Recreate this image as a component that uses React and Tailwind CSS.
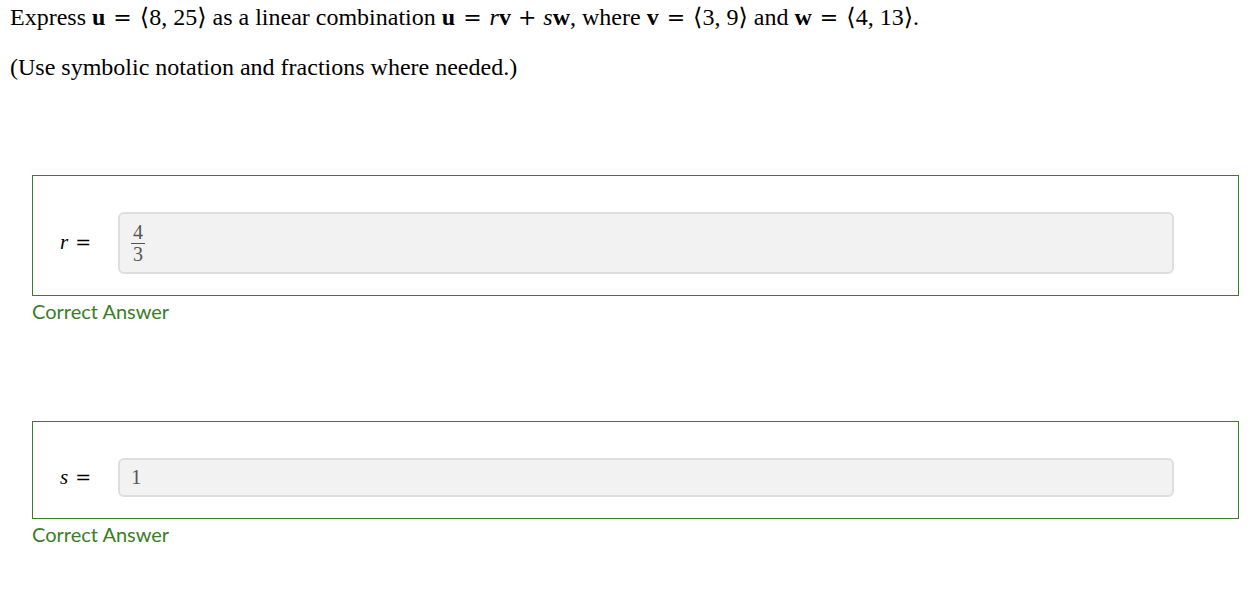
import React from 'react';

const serif = { fontFamily: '"Liberation Serif", "DejaVu Serif", serif' };
const sym = { fontFamily: '"DejaVu Serif", "Liberation Serif", serif' };

// relation sign in math style, a little wider than the text font's
const Op = ({ children, gap = 'mx-[2px]' }) => (
  <span className={`${gap} text-[22px] leading-none`} style={sym}>
    {children}
  </span>
);

const Answer = ({ label, children, tall }) => (
  <div className="ml-[32px] mr-[12px]">
    <div className="border border-[#3b7d26] pt-[36px] pb-[21px] pl-[85px] pr-[64px] relative flex items-center">
      <div className="absolute left-[27px] text-[21px] text-black" style={serif}>
        <i>{label}</i>
        <span className="ml-[7px] text-[19px]" style={sym}>=</span>
      </div>
      <div
        className={`flex-1 rounded-[6px] border-2 border-[#dedede] bg-[#f2f2f2] px-[11px] text-[#555] flex items-center ${
          tall ? 'h-[62px]' : 'h-[39px]'
        }`}
        style={serif}
      >
        {children}
      </div>
    </div>
    <div
      className="mt-[2px] text-[20px] leading-[26px] text-[#3b7d26]"
      style={{ fontFamily: '"Segoe UI", Lato, "Open Sans", sans-serif' }}
    >
      Correct Answer
    </div>
  </div>
);

export default function App() {
  return (
    <div className="min-h-[591px] bg-white text-black">
      <div className="pl-[10px]" style={serif}>
        <p className="pt-[3px] h-[31px] text-[24px] leading-[28px] whitespace-nowrap">
          Express <b>u</b> <Op>=</Op> ⟨8, 25⟩ as a linear combination <b>u</b> <Op>=</Op> <i>r</i>
          <b>v</b> <Op gap="mx-[1px]">+</Op> <i>s</i>
          <b>w</b>, where <b>v</b> <Op>=</Op> ⟨3, 9⟩ and <b>w</b> <Op>=</Op> ⟨4, 13⟩.
        </p>
        <p className="mt-[22px] text-[24px] leading-[28px]">
          (Use symbolic notation and fractions where needed.)
        </p>
      </div>

      <div className="mt-[94px]">
        <Answer label="r" tall>
          <div className="flex flex-col items-center text-[20px] leading-[21px]">
            <span>4</span>
            <span className="w-[14px] border-t border-[#555]" />
            <span>3</span>
          </div>
        </Answer>
      </div>

      <div className="mt-[97px]">
        <Answer label="s">
          <span className="text-[21px]">1</span>
        </Answer>
      </div>
    </div>
  );
}
